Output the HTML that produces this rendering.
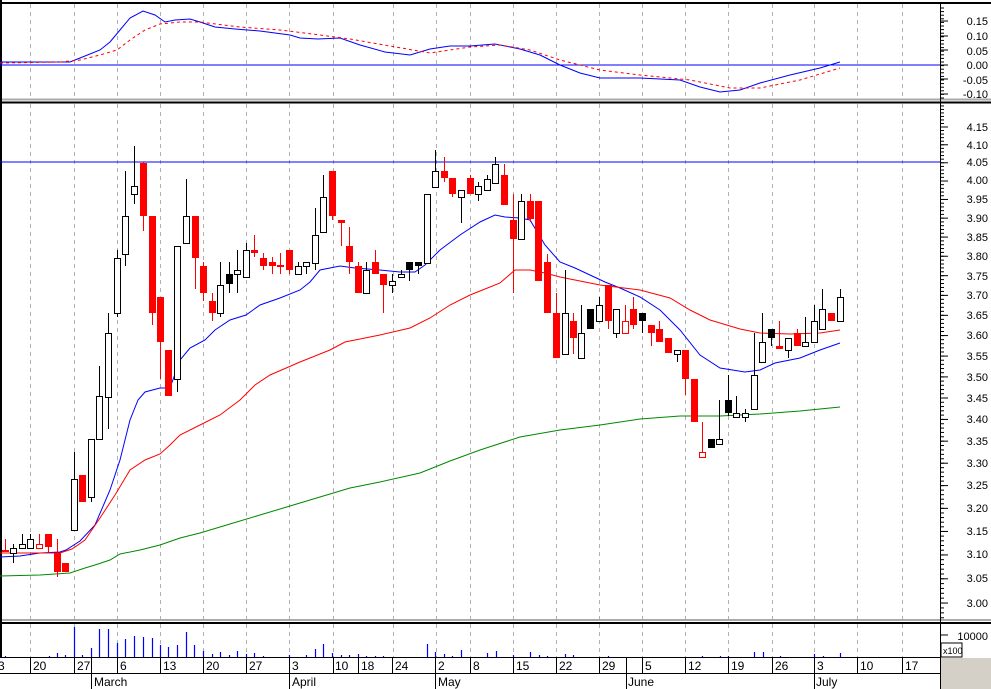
<!DOCTYPE html>
<html><head><meta charset="utf-8"><style>
html,body{margin:0;padding:0;background:#fff;}
svg{display:block;font-family:"Liberation Sans",sans-serif;}
</style></head><body>
<svg id="c" width="991" height="689" viewBox="0 0 991 689" xmlns="http://www.w3.org/2000/svg">
<rect width="991" height="689" fill="#fff"/>
<g id="grid" stroke="#b0b0b0" stroke-dasharray="4,4" stroke-width="1"></g>
<g id="ticks" stroke="#000" stroke-width="1"></g>
<line x1="0" y1="3" x2="991" y2="3" stroke="#000" stroke-width="2"/>
<line x1="0" y1="99.5" x2="991" y2="99.5" stroke="#aaa" stroke-width="2"/>
<line x1="0" y1="102.5" x2="991" y2="102.5" stroke="#000" stroke-width="2"/>
<line x1="0" y1="620" x2="991" y2="620" stroke="#aaa" stroke-width="2"/>
<line x1="0" y1="623" x2="991" y2="623" stroke="#000" stroke-width="2"/>
<line x1="0" y1="657.5" x2="941" y2="657.5" stroke="#000"/>
<line x1="0" y1="673.5" x2="941" y2="673.5" stroke="#000"/>
<line x1="1" y1="0" x2="1" y2="657" stroke="#000" stroke-width="2"/>
<line x1="940.5" y1="3" x2="940.5" y2="689" stroke="#000"/>
<rect x="941" y="658" width="50" height="31" fill="#d4d0c8"/>
<rect x="941" y="643" width="21" height="14" fill="#fff" stroke="#000"/>
<text x="943" y="654" font-size="9">x100</text>
<line x1="0" y1="65" x2="940" y2="65" stroke="#00f"/>
<line x1="0" y1="162" x2="940" y2="162" stroke="#00f"/>
<g id="ma" fill="none" stroke-width="1"></g>
<g id="vol" stroke="#00f" stroke-width="1.2"></g>
<g id="cnd"></g>
<g font-size="11" fill="#000" text-anchor="end">
<text x="988" y="25">0.15</text><text x="988" y="40">0.10</text><text x="988" y="55">0.05</text><text x="988" y="69">0.00</text><text x="988" y="84">-0.05</text><text x="988" y="98">-0.10</text>
<text x="988" y="131">4.15</text><text x="988" y="149">4.10</text><text x="988" y="166">4.05</text><text x="988" y="184">4.00</text><text x="988" y="203">3.95</text>
<text x="988" y="222">3.90</text><text x="988" y="241">3.85</text><text x="988" y="260">3.80</text><text x="988" y="280">3.75</text><text x="988" y="299">3.70</text>
<text x="988" y="319">3.65</text><text x="988" y="339">3.60</text><text x="988" y="360">3.55</text><text x="988" y="381">3.50</text><text x="988" y="402">3.45</text>
<text x="988" y="423">3.40</text><text x="988" y="445">3.35</text><text x="988" y="467">3.30</text><text x="988" y="489">3.25</text><text x="988" y="512">3.20</text>
<text x="988" y="535">3.15</text><text x="988" y="558">3.10</text><text x="988" y="582">3.05</text><text x="988" y="607">3.00</text>
<text x="988" y="640">10000</text>
</g>
<g font-size="12" fill="#000">
<text x="-2" y="670">3</text><text x="33" y="670">20</text><text x="77" y="670">27</text><text x="120" y="670">6</text><text x="163" y="670">13</text>
<text x="206" y="670">20</text><text x="249" y="670">27</text><text x="292" y="670">3</text><text x="335" y="670">10</text><text x="361" y="670">18</text>
<text x="395" y="670">24</text><text x="438" y="670">2</text><text x="473" y="670">8</text><text x="516" y="670">15</text><text x="559" y="670">22</text>
<text x="602" y="670">29</text><text x="645" y="670">5</text><text x="688" y="670">12</text><text x="731" y="670">19</text><text x="775" y="670">26</text>
<text x="817" y="670">3</text><text x="860" y="670">10</text><text x="905" y="670">17</text>
<text x="94" y="686">March</text><text x="292" y="686">April</text><text x="438" y="686">May</text><text x="628" y="686">June</text><text x="816" y="686">July</text>
</g>
</svg>
<script>
var NS="http://www.w3.org/2000/svg";
function el(p,t,a){var e=document.createElementNS(NS,t);for(var k in a)e.setAttribute(k,a[k]);document.getElementById(p).appendChild(e);return e;}
var G=[30,74,117,160,203,246,289,333,393,436,470,513,556,599,642,685,728,772,814,857,902];
G.forEach(function(x){el("grid","line",{x1:x+.5,y1:4,x2:x+.5,y2:98});el("grid","line",{x1:x+.5,y1:104,x2:x+.5,y2:619});el("grid","line",{x1:x+.5,y1:624,x2:x+.5,y2:657});});
var T=[30,74,117,160,203,246,289,333,358,392,435,470,513,556,599,642,685,728,772,814,857,902];
T.forEach(function(x){el("ticks","line",{x1:x+.5,y1:657,x2:x+.5,y2:673});});
[91,289,435,626,814].forEach(function(x){el("ticks","line",{x1:x+.5,y1:657,x2:x+.5,y2:689});});
for(var y=8;y<98;y+=3.6){el("ticks","line",{x1:941,y1:y,x2:944,y2:y});}
function py(p){return 127+1467*Math.log(4.15/p);}
for(var p=4.25;p>2.93;p-=0.01){var yy=py(p);if(yy>105&&yy<618)el("ticks","line",{x1:941,y1:yy,x2:944,y2:yy});}
[21,36,50,65,79,94].forEach(function(y){el("ticks","line",{x1:941,y1:y,x2:948,y2:y});});
for(var i=0;i<24;i++){var yy=py(4.15-i*0.05);el("ticks","line",{x1:941,y1:yy,x2:948,y2:yy});}
el("ticks","line",{x1:941,y1:635,x2:948,y2:635});
function pl(pts,c,d){var s=pts.map(function(p){return p.join(",")}).join(" ");var a={points:s,stroke:c};if(d)a["stroke-dasharray"]=d;el("ma","polyline",a);}
pl([[0,557],[20,556],[40,553],[60,552],[66,550],[80,541],[95,525],[110,490],[120,460],[130,420],[138,400],[145,392],[160,388],[170,388],[180,360],[190,348],[205,340],[215,330],[230,320],[246,315],[260,305],[280,298],[300,290],[310,282],[320,270],[340,266],[355,268],[380,270],[400,272],[415,272],[425,265],[440,250],[460,235],[480,222],[495,215],[505,217],[520,218],[530,220],[545,245],[560,262],[575,268],[590,275],[605,282],[620,288],[640,297],[660,310],[680,330],[700,355],[720,368],[745,372],[760,370],[775,363],[800,358],[820,350],[840,343]],"#00f");
pl([[0,553],[20,553],[60,553],[72,549],[85,540],[100,518],[115,495],[130,470],[145,460],[160,454],[170,445],[180,435],[200,425],[220,415],[240,400],[255,385],[270,375],[300,362],[330,350],[345,342],[380,335],[410,328],[430,318],[450,305],[470,295],[485,289],[500,283],[515,270],[530,270],[545,273],[560,277],[600,285],[640,290],[670,298],[690,310],[710,320],[740,329],[760,333],[790,334],[820,333],[840,330]],"#f00");
pl([[0,576],[40,575],[70,573],[85,568],[95,565],[110,560],[120,554],[140,550],[160,545],[180,538],[200,533],[230,524],[260,515],[290,506],[320,497],[350,488],[380,482],[420,473],[450,461],[480,450],[520,437],[560,430],[600,425],[640,419],[680,416],[720,416],[760,414],[800,411],[840,407]],"#080");
pl([[0,62],[60,62],[70,62],[80,58],[100,50],[110,42],[120,30],[130,18],[143,11],[155,15],[165,22],[175,20],[190,19],[200,22],[215,27],[235,29],[260,31],[290,35],[300,38],[318,39],[340,38],[360,45],[385,52],[410,55],[430,49],[450,46],[470,46],[495,44],[520,49],[540,55],[560,65],[580,73],[600,78],[640,78],[680,80],[700,87],[720,92],[740,90],[760,83],[790,75],[820,68],[840,62]],"#00f");
pl([[0,63],[60,62],[80,60],[100,55],[117,50],[130,40],[145,30],[160,24],[180,22],[200,22],[240,27],[280,30],[320,35],[350,39],[390,46],[430,53],[470,47],[500,45],[530,50],[560,60],[600,70],[640,75],[690,80],[730,88],[760,88],[800,80],[840,68]],"#f00","3,3");
var V=[[5,656],[49,656],[57,653],[65,655],[74,627],[82,655],[91,648],[99,629],[108,629],[117,643],[125,639],[134,636],[143,637],[152,638],[160,645],[168,647],[177,645],[186,632],[194,645],[203,651],[212,654],[220,652],[229,655],[237,651],[246,654],[254,653],[263,656],[289,655],[306,655],[315,649],[323,644],[332,653],[341,655],[349,655],[358,654],[366,656],[375,656],[383,656],[427,644],[435,652],[444,654],[452,656],[461,650],[487,653],[496,651],[513,655],[530,652],[539,655],[547,656],[565,654],[573,655],[608,656],[702,656],[720,656],[728,656],[754,652],[763,652],[780,656],[814,654],[823,656],[840,653]];
V.forEach(function(v){el("vol","line",{x1:v[0]+.5,y1:v[1],x2:v[0]+.5,y2:657});});
var C=[[5,539,552,550,552,"r"],[13,544,563,548,553,"w"],[22,534,548,544,548,"w"],[30,534,548,539,548,"w"],[39,534,548,544,548,"o"],[48,534,552,534,547,"r"],[57,539,577,553,572,"r"],[65,563,572,563,572,"r"],[74,452,530,479,530,"w"],[82,475,502,475,502,"r"],[91,439,502,439,497,"w"],[99,366,439,396,439,"w"],[108,313,429,333,397,"w"],[117,250,317,258,313,"w"],[125,171,266,216,254,"w"],[134,146,204,186,194,"w"],[143,162,231,163,216,"r"],[152,216,325,216,313,"r"],[160,297,379,297,342,"r"],[168,350,396,350,396,"r"],[177,246,392,246,379,"w"],[186,179,243,216,243,"w"],[195,216,289,216,258,"r"],[203,262,301,266,293,"r"],[212,293,321,301,313,"r"],[220,262,317,285,313,"w"],[229,262,293,274,284,"k"],[237,250,293,270,274,"w"],[246,243,277,250,277,"w"],[254,235,257,250,253,"r"],[263,253,270,258,266,"r"],[272,257,274,262,266,"r"],[280,253,274,265,266,"r"],[289,250,274,250,270,"r"],[298,262,274,266,274,"w"],[306,262,274,262,266,"w"],[315,208,270,235,263,"w"],[323,175,233,197,232,"w"],[332,171,220,171,216,"r"],[341,220,246,220,223,"r"],[349,227,274,246,262,"r"],[358,262,293,266,293,"r"],[366,262,293,270,293,"w"],[375,250,274,262,274,"r"],[383,274,313,274,285,"r"],[392,274,293,281,285,"w"],[401,270,277,274,277,"w"],[409,262,281,262,270,"k"],[418,262,274,262,266,"k"],[427,194,263,194,263,"w"],[435,150,187,171,187,"w"],[444,157,182,171,178,"r"],[452,178,197,178,194,"r"],[461,190,223,190,197,"w"],[470,175,194,178,194,"r"],[478,182,201,186,194,"w"],[487,175,190,179,190,"w"],[495,157,183,164,183,"w"],[504,164,205,175,205,"r"],[513,194,293,220,239,"r"],[521,194,239,201,239,"w"],[530,194,222,201,219,"r"],[538,201,281,201,281,"r"],[547,254,313,262,313,"r"],[556,293,358,313,358,"r"],[565,270,354,313,354,"w"],[573,313,354,321,338,"r"],[581,305,358,333,358,"w"],[590,309,329,309,329,"k"],[599,297,321,305,321,"w"],[608,285,329,285,321,"r"],[616,309,338,309,333,"w"],[625,305,333,321,333,"o"],[633,297,329,309,325,"r"],[642,313,333,313,321,"k"],[651,325,346,325,333,"r"],[659,321,342,329,342,"r"],[668,338,353,338,353,"r"],[677,350,362,350,354,"w"],[685,350,395,350,379,"r"],[694,379,422,379,422,"r"],[702,422,457,452,457,"o"],[711,439,448,439,448,"k"],[719,400,444,439,444,"w"],[728,375,416,400,413,"k"],[736,396,417,413,417,"w"],[745,409,422,413,417,"w"],[754,333,409,375,409,"w"],[762,313,362,342,362,"w"],[771,329,346,329,338,"k"],[779,321,349,346,349,"r"],[788,338,358,338,350,"w"],[797,329,346,333,346,"r"],[805,317,346,342,346,"w"],[814,305,342,321,342,"w"],[822,289,329,309,329,"w"],[831,313,321,313,321,"r"],[840,289,321,297,321,"w"]];
C.forEach(function(c){var x=c[0],t=c[5];var wc=(t=="r"||t=="o")?"#f00":"#000";
el("cnd","line",{x1:x+.5,y1:c[1],x2:x+.5,y2:c[2],stroke:wc});
var h=Math.max(c[4]-c[3],2);
if(t=="w")el("cnd","rect",{x:x-2.5,y:c[3]+.5,width:6,height:h,fill:"#fff",stroke:"#000"});
else if(t=="o")el("cnd","rect",{x:x-2.5,y:c[3]+.5,width:6,height:h,fill:"#fff",stroke:"#f00"});
else el("cnd","rect",{x:x-3,y:c[3],width:7,height:h,fill:t=="r"?"#f00":"#000"});});
</script>
</body></html>
